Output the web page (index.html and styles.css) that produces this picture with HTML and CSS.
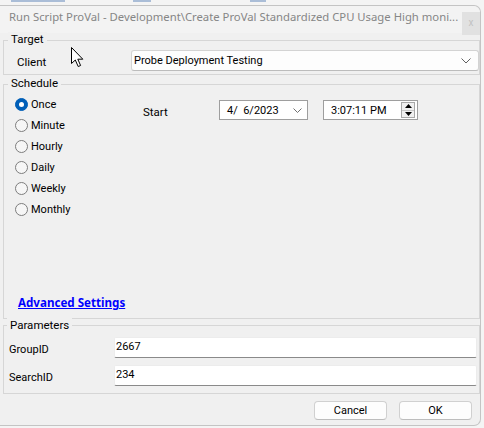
FILE: index.html
```html
<!DOCTYPE html>
<html>
<head>
<meta charset="utf-8">
<link rel="stylesheet" href="styles.css">
</head>
<body>
<div class="stage">
  <div class="behind">
    <span class="bit b1"></span><span class="bit b2"></span><span class="bit b3"></span>
  </div>
  <div class="window">
    <div class="titlebar">
      <span class="title">Run Script ProVal - Development\Create ProVal Standardized CPU Usage High moni...</span>
      <span class="close">x</span>
    </div>

    <div class="group target">
      <div class="legend">Target</div>
      <div class="row client-row">
        <span class="label client-label">Client</span>
        <div class="combo">
          <span>Probe Deployment Testing</span>
          <svg class="chev" width="10" height="6" viewBox="0 0 10 6"><path d="M0.5 0.5 L5 5 L9.5 0.5" fill="none" stroke="#606060" stroke-width="1"/></svg>
        </div>
      </div>
    </div>

    <div class="group schedule">
      <div class="legend">Schedule</div>
      <div class="sched-body">
        <div class="radios">
          <div class="radio-row"><span class="radio on"></span><span>Once</span></div>
          <div class="radio-row"><span class="radio"></span><span>Minute</span></div>
          <div class="radio-row"><span class="radio"></span><span>Hourly</span></div>
          <div class="radio-row"><span class="radio"></span><span>Daily</span></div>
          <div class="radio-row"><span class="radio"></span><span>Weekly</span></div>
          <div class="radio-row"><span class="radio"></span><span>Monthly</span></div>
        </div>
        <div class="start">
          <span class="start-label">Start</span>
          <div class="picker date">
            <span class="pre">4/  6/2023</span>
            <svg class="dchev" width="9" height="5" viewBox="0 0 9 5"><path d="M0.5 0.5 L4.5 4.5 L8.5 0.5" fill="none" stroke="#707070" stroke-width="1"/></svg>
          </div>
          <div class="picker time">
            <span>3:07:11 PM</span>
            <div class="spin">
              <span class="spin-half"><svg width="7" height="4" viewBox="0 0 7 4"><path d="M3.5 0 L7 4 L0 4 Z" fill="#000"/></svg></span>
              <span class="spin-half"><svg width="7" height="4" viewBox="0 0 7 4"><path d="M0 0 L7 0 L3.5 4 Z" fill="#000"/></svg></span>
            </div>
          </div>
        </div>
      </div>
      <a class="adv" href="#">Advanced Settings</a>
    </div>

    <div class="group params">
      <div class="legend">Parameters</div>
      <div class="row param-row first">
        <span class="label param-label">GroupID</span>
        <div class="textbox">2667</div>
      </div>
      <div class="row param-row">
        <span class="label param-label">SearchID</span>
        <div class="textbox">234</div>
      </div>
    </div>

    <div class="buttons">
      <div class="btn">Cancel</div>
      <div class="btn">OK</div>
    </div>
  </div>

  <svg class="cursor" width="14" height="21" viewBox="0 0 14 21">
    <path d="M0.5 0.5 L0.5 16.5 L4.3 13 L7.2 19.5 L9.6 18.5 L6.8 12.2 L11.8 12.2 Z" fill="#fff" stroke="#000" stroke-width="1" stroke-linejoin="miter"/>
  </svg>
</div>
</body>
</html>
```
FILE: styles.css
```css
* { box-sizing: border-box; }
html, body { margin: 0; padding: 0; }
body {
  font-family: Roboto, "Noto Sans", sans-serif;
  font-size: 11px;
  color: #000;
  background: #f4f4f4;
}
.stage {
  position: relative;
  width: 484px;
  height: 428px;
  overflow: hidden;
  background: #f4f4f4;
  display: flex;
  flex-direction: column;
}
.behind {
  height: 5px;
  display: flex;
  align-items: flex-start;
}
.bit { display: block; height: 2px; background: #6d8fc0; opacity: 0.55; }
.b1 { width: 54px; margin-left: 11px; }
.b2 { width: 18px; margin-left: 68px; }
.b3 { width: 16px; margin-left: 99px; }

.window {
  width: 481px;
  height: 421px;
  background: #f0f0f0;
  border: 1px solid #c4c4c4;
  border-left: none;
  border-radius: 0 7px 7px 0;
  display: flex;
  flex-direction: column;
}
.titlebar {
  height: 27px;
  background: #f3f3f3;
  display: flex;
  align-items: flex-start;
  border-radius: 0 7px 0 0;
}
.title {
  font-family: "Noto Sans", sans-serif;
  font-size: 11.3px;
  color: #868686;
  line-height: 16px;
  margin-top: 3px;
  margin-left: 9px;
  white-space: nowrap;
  min-width: 0;
  overflow: hidden;
}
.close {
  margin-left: auto;
  margin-top: 6px;
  width: 18px;
  height: 23px;
  flex: none;
  background: #e1e1e1;
  color: #c2c2c2;
  font-size: 10px;
  line-height: 21px;
  text-align: center;
}

.group {
  margin-left: 3px;
  border: 1px solid #d6d6d6;
  display: flex;
  flex-direction: column;
}
.legend {
  align-self: flex-start;
  line-height: 14px;
  height: 14px;
  margin-top: -9px;
  margin-left: 4px;
  padding: 0 3px;
  background: #f0f0f0;
  font-size: 11.5px;
}
.target { margin-top: 7px; height: 35px; }
.schedule { margin-top: 9px; height: 235px; }
.params { margin-top: 6px; height: 69px; }
.params .legend { margin-top: -8px; margin-left: 3px; }

.row { display: flex; align-items: center; }
.client-row { margin-top: 4px; height: 21px; }
.client-label { margin-left: 13px; width: 114px; padding-top: 2px; font-size: 11.5px; }
.combo {
  flex: 1;
  height: 21px;
  background: #fdfdfd;
  border: 1px solid #d3d3d3;
  border-bottom-color: #bcbcbc;
  border-radius: 3px;
  display: flex;
  align-items: center;
  padding-left: 2px;
  padding-right: 7px;
}
.chev { margin-left: auto; }

.sched-body { display: flex; margin-top: 4px; }
.radios { width: 135px; padding-left: 11px; }
.radio-row { height: 21px; display: flex; align-items: center; }
.radio {
  width: 13px;
  height: 13px;
  border-radius: 50%;
  border: 1px solid #7d7d7d;
  background: #f6f6f6;
  margin-right: 3px;
  flex: none;
}
.radio.on {
  background: #005fb8;
  border-color: #005fb8;
  display: flex;
  align-items: center;
  justify-content: center;
}
.radio.on::after {
  content: "";
  width: 5px;
  height: 5px;
  border-radius: 50%;
  background: #fff;
}
.start {
  margin-left: 4px;
  margin-top: 6px;
  display: flex;
  align-items: flex-start;
  height: 20px;
}
.start-label { width: 76px; padding-top: 4px; line-height: 16px; font-size: 11.5px; }
.picker {
  height: 20px;
  background: #fff;
  border: 1px solid #9e9e9e;
  display: flex;
  align-items: center;
}
.date { width: 89px; padding-left: 7px; padding-right: 5px; }
.pre { white-space: pre; }
.dchev { margin-left: auto; }
.time { width: 95px; margin-left: 15px; padding-left: 7px; padding-right: 2px; }
.spin {
  margin-left: auto;
  width: 14px;
  height: 16px;
  border: 1px solid #a8a8a8;
  background: #f0f0f0;
  display: flex;
  flex-direction: column;
}
.spin-half {
  flex: 1;
  display: flex;
  align-items: center;
  justify-content: center;
}
.spin-half:first-child { border-bottom: 1px solid #c8c8c8; }

.adv {
  margin-top: auto;
  margin-bottom: 7px;
  margin-left: 14px;
  line-height: 16px;
  font-family: "Noto Sans", sans-serif;
  font-size: 11.6px;
  font-weight: bold;
  color: #0000ff;
  text-decoration: underline;
  align-self: flex-start;
}

.param-row { height: 21px; margin-top: 7px; }
.param-row.first { margin-top: 5px; }
.param-label { width: 105px; margin-left: 5px; padding-top: 3px; }
.textbox {
  flex: 1;
  height: 21px;
  margin-right: 2px;
  background: #fff;
  border: 1px solid #ececec;
  border-bottom-color: #8a8a8a;
  border-radius: 2px;
  padding-left: 1px;
  line-height: 18px;
}

.buttons {
  display: flex;
  justify-content: flex-end;
  gap: 12px;
  margin-top: 7px;
  padding-right: 8px;
}
.btn {
  width: 73px;
  height: 19px;
  background: #fdfdfd;
  border: 1px solid #d0d0d0;
  border-bottom-color: #bdbdbd;
  border-radius: 4px;
  text-align: center;
  line-height: 17px;
}

.cursor {
  position: absolute;
  left: 71px;
  top: 47px;
}
```
